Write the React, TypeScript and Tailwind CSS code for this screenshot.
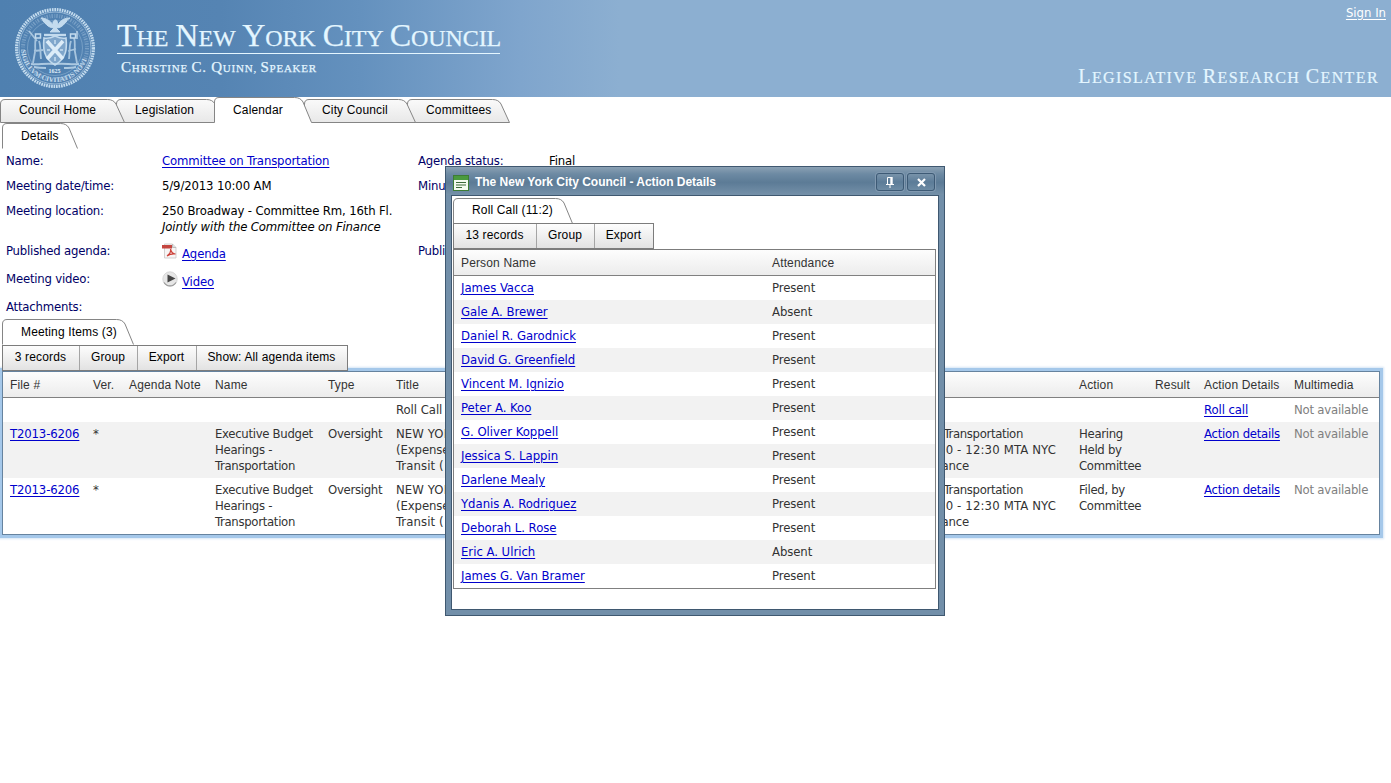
import React from "react";

const link = "text-[#0000cc] underline underline-offset-2 decoration-1";
const tahoma = "font-['DejaVu_Sans_Condensed','DejaVu_Sans',sans-serif] [font-stretch:condensed] text-[13px] leading-4";
const arial = "font-['Liberation_Sans',Arial,sans-serif] text-[12px] tracking-[0.15px]";

function Seal() {
  return (
    <svg width="82" height="82" viewBox="0 0 82 82" fill="none" stroke="#c3dbee" className="shrink-0">
      <defs>
        <path id="ringText" d="M7 41a34 34 0 0 0 68 0" />
      </defs>
      <circle cx="41" cy="41" r="38.4" strokeWidth="3.2" strokeDasharray="1.7 0.8" />
      <circle cx="41" cy="41" r="36" strokeWidth="1" opacity=".6" />
      <circle cx="41" cy="41" r="32" strokeWidth="4" strokeDasharray="1.4 1.6 .8 1.1" opacity=".35" />
      <circle cx="41" cy="41" r="27.5" strokeWidth=".8" opacity=".4" />
      <text fontSize="7" fill="#c3dbee" stroke="none" className="font-['Liberation_Serif',serif] font-bold">
        <textPath href="#ringText" startOffset="2">SIGILLVM CIVITATIS NOVI</textPath>
      </text>
      <path d="M39 18c-3-5-8-7-12-7 2 2 2 4 4 5 2 3 6 5 9 5l-4 4h10l-4-4c4 0 7-2 9-5 2-1 2-4 5-5-5 0-10 2-12 7l-1-4c-1-2-3-1-4 1z" fill="#c3dbee" />
      <path d="M30 28h22" strokeWidth="2.4" />
      <path d="M30 31c4 1 7 0 11-2 4 2 7 3 11 2 1 10 1 20-11 27-12-7-12-17-11-27z" strokeWidth="1.6" fill="#7fa6cb" />
      <path d="M33 34l16 18M49 34L33 52" strokeWidth="3.6" stroke="#dcecf8" />
      <path d="M41 33v4M41 50v4M33 43h3M46 43h3" strokeWidth="2" opacity=".8" />
      <path d="M22 31c-2 5 0 9-1 14l-2 11M25 34c2 5 1 10 2 18M20 44l9-1M15 24l8 10M60 31c2 5 0 9 1 14l2 11M57 34c-2 5-1 10-2 18M62 42l-8 2M63 24v8" strokeWidth="1.8" opacity=".75" />
      <rect x="21.500" y="27" width="5" height="4" strokeWidth="1.500" />
      <rect x="56.500" y="27" width="5" height="4" strokeWidth="1.500" />
      <path d="M17 57c8 1 13-1 24 0 11-1 16 1 24 0M20 60c5 1 8 1 12 1M50 61c5 0 8 0 12-1" strokeWidth="2" opacity=".8" />
      <text x="34.500" y="66" fontSize="6" fill="#e2f0fa" stroke="none" className="font-['Liberation_Serif',serif] font-bold">1625</text>
    </svg>
  );
}

function Header() {
  return (
    <header className="flex h-[97px] justify-between bg-[linear-gradient(90deg,#4f80b0_0,#5584b3_220px,#6491be_360px,#7fa5cd_520px,#8cafd1_620px)] text-[#e4f6ff]">
      <div className="flex pl-[14px] pt-[7px]">
        <Seal />
        <div className="ml-[21px] mt-[10px] w-[383px] whitespace-nowrap font-['Liberation_Serif',serif]">
          <div className="h-[37px] border-b border-[#e4f6ff] text-[24px] leading-[37px] tracking-[-0.1px] [word-spacing:1.2px] [-webkit-text-stroke:0.25px_#e4f6ff]">
            <span className="text-[32px]">T</span>HE <span className="text-[32px]">N</span>EW <span className="text-[32px]">Y</span>ORK <span className="text-[32px]">C</span>ITY <span className="text-[32px]">C</span>OUNCIL
          </div>
          <div className="pl-1 pt-[3px] text-[11px] leading-[20px] tracking-[0.76px] [-webkit-text-stroke:0.25px_#e4f6ff]">
            <span className="text-[15px]">C</span>HRISTINE <span className="text-[15px]">C. Q</span>UINN, <span className="text-[15px]">S</span>PEAKER
          </div>
        </div>
      </div>
      <div className="flex flex-col items-end justify-between whitespace-nowrap">
        <a className={`${tahoma} mr-[5px] mt-[5px] text-white underline underline-offset-2`}>Sign In</a>
        <div className="mb-[7px] mr-[12px] font-['Liberation_Serif',serif] text-[16px] leading-[24px] tracking-[1.4px] [-webkit-text-stroke:0.2px_#e4f6ff]">
          <span className="text-[20px]">L</span>EGISLATIVE <span className="text-[20px]">R</span>ESEARCH <span className="text-[20px]">C</span>ENTER
        </div>
      </div>
    </header>
  );
}

type TabProps = { label: string; w: number; h?: number; open?: boolean; pad: string; className?: string };

function Tab({ label, w, h = 24, open = false, pad, className = "" }: TabProps) {
  const r = w - 0.5;
  const d = `M.5 ${h - 0.5}V5Q.5 .5 5 .5H${r - 17}Q${r - 11} .5 ${r - 8.5} 5L${r} ${h - 0.5}`;
  const fill = open ? "#ffffff" : "url(#tabFill)";
  return (
    <div className={`relative shrink-0 ${className}`} style={{ width: w, height: h }}>
      <svg width={w} height={h} className="absolute inset-0">
        <defs>
          <linearGradient id="tabFill" x1="0" y1="0" x2="0" y2="1">
            <stop offset="0" stopColor="#fafafa" />
            <stop offset="1" stopColor="#e8e8e8" />
          </linearGradient>
        </defs>
        <path d={open ? `${d}V${h}H.5Z` : `${d}Z`} fill={fill} />
        <path d={open ? d : `${d}Z`} fill="none" stroke="#858585" />
      </svg>
      <span className={`${arial} relative block whitespace-nowrap leading-4 text-black ${pad}`}>{label}</span>
    </div>
  );
}

function Toolbar({ items }: { items: [string, string][] }) {
  return (
    <div className="relative z-10 flex h-[26px] w-fit border border-[#7c7c7c] bg-[linear-gradient(#fdfdfd,#e2e2e2)]">
      {items.map(([t, w], i) => (
        <div key={t} className={`${arial} ${w} flex items-center justify-center whitespace-nowrap pb-[2px] pr-px text-black ${i ? "border-l border-[#a5a5a5]" : ""}`}>
          {t}
        </div>
      ))}
    </div>
  );
}

function PdfIcon() {
  return (
    <svg width="16" height="16" viewBox="0 0 16 16">
      <path d="M2.500 1h8l3.500 3.500V15H2.500z" fill="#f7f5f5" stroke="#c9c5c5" strokeWidth=".8" />
      <path d="M10.500 1v3.500H14" fill="#ddd" stroke="#aaa" strokeWidth=".7" />
      <path d="M0 2h10v3.500H0z" fill="#c4453f" />
      <path d="M5 13c3-2 4-5 3.500-7 1 4 3 5 5 5-3-.4-6 .2-8.500 2" fill="none" stroke="#cc4038" strokeWidth="1.200" />
    </svg>
  );
}

function PlayIcon() {
  return (
    <svg width="16" height="16" viewBox="0 0 16 16">
      <circle cx="8" cy="8" r="7.200" fill="#e6e6e6" stroke="#cfcfcf" strokeWidth=".8" />
      <path d="M2 11.500a7 7 0 0 0 12 0" fill="none" stroke="#9b9b9b" strokeWidth="1.200" />
      <path d="M5.500 3.500v8l8-4z" fill="#444" />
    </svg>
  );
}

const label = "text-[#000066] tracking-[-0.2px]";

function Details() {
  return (
    <div className={`${tahoma} grid w-[700px] grid-cols-[156px_256px_131px_1fr] grid-rows-[25px_25px_40px_28px_28px_20px] pl-[6px] pt-[4px] tracking-[-0.14px] text-black`}>
      <div className={label}>Name:</div>
      <div><a className={link}>Committee on Transportation</a></div>
      <div className={label}>Agenda status:</div>
      <div>Final</div>
      <div className={label}>Meeting date/time:</div>
      <div>5/9/2013 10:00 AM</div>
      <div className={label}>Minutes status:</div>
      <div />
      <div className={label}>Meeting location:</div>
      <div className="whitespace-nowrap">250 Broadway - Committee Rm, 16th Fl.<br /><i>Jointly with the Committee on Finance</i></div>
      <div /><div />
      <div className={label}>Published agenda:</div>
      <div className="flex gap-[4px]"><PdfIcon /><a className={`${link} mt-[3px] h-4`}>Agenda</a></div>
      <div className={label}>Published minutes:</div>
      <div />
      <div className={label}>Meeting video:</div>
      <div className="flex gap-[4px]"><PlayIcon /><a className={`${link} mt-[3px] h-4`}>Video</a></div>
      <div /><div />
      <div className={label}>Attachments:</div>
    </div>
  );
}

const cols = "grid grid-cols-[83px_36px_86px_113px_68px_683px_76px_49px_90px_1fr] pl-[7px]";

type Item = { action: string; bg: string };
const items: Item[] = [
  { action: "Hearing\nHeld by\nCommittee", bg: "bg-[#f2f2f2]" },
  { action: "Filed, by\nCommittee", bg: "bg-white" },
];

function ItemsTable() {
  return (
    <div className="ml-[2px] w-[1378px] border border-[#66839f] shadow-[0_0_0_3px_#a5c8ea,0_0_2px_4px_#d5e5f5]">
      <div className={`${arial} ${cols} h-[26px] whitespace-nowrap border-b border-[#808080] bg-[linear-gradient(#fdfdfd,#ececec)] leading-[26px] text-[#333]`}>
        {["File #", "Ver.", "Agenda Note", "Name", "Type", "Title", "Action", "Result", "Action Details", "Multimedia"].map((t) => <div key={t}>{t}</div>)}
      </div>
      <div className={`${tahoma} ${cols} h-6 bg-white pt-1 tracking-[-0.22px] text-[#333]`}>
        <div /><div /><div /><div /><div />
        <div className="tracking-[-0.05px]">Roll Call</div>
        <div /><div />
        <div><a className={`${link} tracking-[-0.1px]`}>Roll call</a></div>
        <div className="text-[#808080]">Not available</div>
      </div>
      {items.map((it) => (
        <div key={it.action} className={`${tahoma} ${cols} ${it.bg} h-14 whitespace-nowrap pt-1 tracking-[-0.3px] text-[#333]`}>
          <div><a className={`${link} tracking-[-0.15px]`}>T2013-6206</a></div>
          <div>*</div>
          <div />
          <div>Executive Budget<br />Hearings -<br />Transportation</div>
          <div>Oversight</div>
          <div className="tracking-[0.1px]">
            <div className="flex w-[627px] justify-between"><span>NEW YORK</span><span className="tracking-[-0.35px]">Transportation</span></div>
            <div className="flex w-[660px] justify-between"><span className="tracking-[-0.1px]">(Expense)</span><span className="tracking-[0.15px]">10 - 12:30 MTA NYC</span></div>
            <div className="flex w-[573px] justify-between"><span>Transit (</span><span className="tracking-[-0.2px]">Finance</span></div>
          </div>
          <div className="whitespace-pre">{it.action}</div>
          <div />
          <div><a className={`${link} tracking-[-0.24px]`}>Action details</a></div>
          <div className="tracking-[-0.22px] text-[#808080]">Not available</div>
        </div>
      ))}
    </div>
  );
}

const people: [string, boolean][] = [
  ["James Vacca", true], ["Gale A. Brewer", false], ["Daniel R. Garodnick", true], ["David G. Greenfield", true],
  ["Vincent M. Ignizio", true], ["Peter A. Koo", true], ["G. Oliver Koppell", true], ["Jessica S. Lappin", true],
  ["Darlene Mealy", true], ["Ydanis A. Rodriguez", true], ["Deborah L. Rose", true], ["Eric A. Ulrich", false],
  ["James G. Van Bramer", true],
];

function TitleButton({ children }: { children: React.ReactNode }) {
  return (
    <div className="flex h-[18px] w-[28px] items-center justify-center rounded-[3px] border border-[#3d5a75] bg-[linear-gradient(#7893aa,#5c7c98_50%,#6d8ba4)] shadow-[0_0_0_1px_#8199b0]">
      {children}
    </div>
  );
}

function Dialog() {
  return (
    <div className="absolute left-[445px] top-[166px] flex h-[450px] w-[500px] flex-col border border-[#3f5870] bg-[#728fa9] px-[5px] pb-[5px]">
      <div className="-mx-[5px] flex h-[28px] shrink-0 items-center bg-[linear-gradient(#8ba1b4_0,#6d8aa3_25%,#5c7b96_55%,#7591a9_100%)] pl-[7px] pr-[9px] pt-[2px]">
        <svg width="16" height="16" viewBox="0 0 16 16" className="mt-[2px]">
          <rect x=".5" y=".5" width="15" height="15" fill="#f4fbf0" stroke="#3d7c35" />
          <rect x="1" y="1" width="14" height="4" fill="#4a9a3e" />
          <path d="M3 7.500h10M3 10h10M3 12.500h6" stroke="#3d6b3a" />
        </svg>
        <div className="ml-[6px] flex-1 whitespace-nowrap font-['Liberation_Sans',Arial,sans-serif] text-[12px] font-bold leading-4 tracking-[-0.02px] text-white">The New York City Council - Action Details</div>
        <div className="flex gap-[3px]">
          <TitleButton>
            <svg width="10" height="12" viewBox="0 0 10 12" fill="none" stroke="#fff"><path d="M2.500 8V1.500h4M1 8.500h8M5 9v3" /><path d="M6.500 1v7" strokeWidth="2.400" /></svg>
          </TitleButton>
          <TitleButton>
            <svg width="9" height="9" viewBox="0 0 9 9" stroke="#fff" strokeWidth="2.200"><path d="M1 1l7 7M8 1L1 8" /></svg>
          </TitleButton>
        </div>
      </div>
      <div className="flex-1 border border-[#3f5870] bg-white pl-px pt-[2px]">
        <Tab label="Roll Call (11:2)" w={120} h={26} open pad="pl-[19px] pt-[4px]" />
        <div className="-mt-px"><Toolbar items={[["13 records", "w-[82px]"], ["Group", "w-[58px]"], ["Export", "w-[59px]"]]} /></div>
        <div className="w-[483px] border border-[#808080] border-t-[#7c7c7c]">
          <div className={`${arial} grid h-[26px] grid-cols-[311px_1fr] border-b border-[#808080] bg-[linear-gradient(#fdfdfd,#ececec)] pl-[7px] leading-[26px] text-[#333]`}>
            <div>Person Name</div><div>Attendance</div>
          </div>
          {people.map(([name, here], i) => (
            <div key={name} className={`${tahoma} grid h-6 grid-cols-[311px_1fr] pl-[7px] pt-1 text-[#333] ${i % 2 ? "bg-[#f2f2f2]" : "bg-white"}`}>
              <div className="tracking-[-0.02px]"><a className={link}>{name}</a></div>
              <div className="tracking-[-0.1px]">{here ? "Present" : "Absent"}</div>
            </div>
          ))}
        </div>
      </div>
    </div>
  );
}

export default function App() {
  return (
    <div className="relative h-[783px] w-[1391px] overflow-hidden bg-white">
      <Header />
      <nav className="flex h-[26px] items-end">
        <Tab label="Council Home" w={125} pad="pl-[19px] pt-[3px]" className="z-20" />
        <Tab label="Legislation" w={108} pad="pl-[19px] pt-[3px]" className="z-10 -ml-[9px]" />
        <Tab label="Calendar" w={98} h={26} open pad="pl-[19px] pt-[5px]" className="z-30 -ml-[10px]" />
        <Tab label="City Council" w={112} pad="pl-[18px] pt-[3px]" className="z-20 -ml-[8px]" />
        <Tab label="Committees" w={103} pad="pl-[19px] pt-[3px]" className="z-10 -ml-[9px]" />
      </nav>
      <Tab label="Details" w={76} h={26} open pad="pl-[19px] pt-[5px]" className="ml-[2px]" />
      <Details />
      <Tab label="Meeting Items (3)" w={132} h={26} open pad="pl-[19px] pt-[5px]" className="ml-[2px]" />
      <div className="ml-[2px]">
        <Toolbar items={[["3 records", "w-[76px]"], ["Group", "w-[58px]"], ["Export", "w-[59px]"], ["Show: All agenda items", "w-[151px]"]]} />
      </div>
      <ItemsTable />
      <Dialog />
    </div>
  );
}
